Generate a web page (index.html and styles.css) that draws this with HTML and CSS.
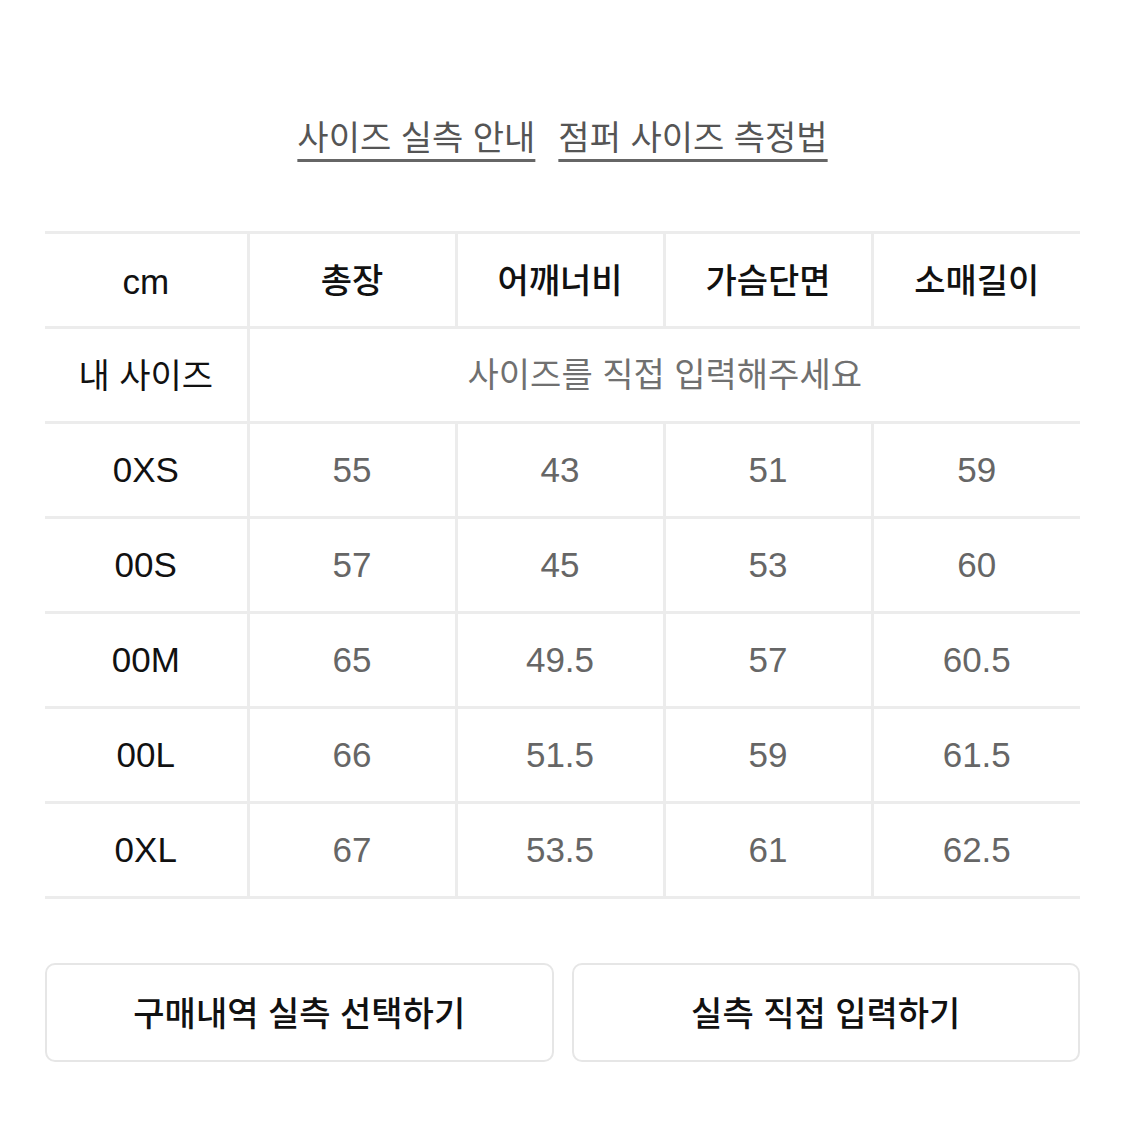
FILE: index.html
```html
<!DOCTYPE html>
<html lang="ko">
<head>
<meta charset="utf-8">
<link rel="stylesheet" href="styles.css">
</head>
<body>
<div class="page">
  <nav class="links">
    <a class="link">사이즈 실측 안내</a>
    <a class="link">점퍼 사이즈 측정법</a>
  </nav>
  <table class="size-table">
    <colgroup>
      <col class="c-label"><col class="c-val"><col class="c-val"><col class="c-val"><col class="c-val">
    </colgroup>
    <thead>
      <tr>
        <th class="unit">cm</th>
        <th>총장</th>
        <th>어깨너비</th>
        <th>가슴단면</th>
        <th>소매길이</th>
      </tr>
    </thead>
    <tbody>
      <tr>
        <th class="rowlabel">내 사이즈</th>
        <td colspan="4" class="placeholder">사이즈를 직접 입력해주세요</td>
      </tr>
      <tr><th class="rowlabel">0XS</th><td>55</td><td>43</td><td>51</td><td>59</td></tr>
      <tr><th class="rowlabel">00S</th><td>57</td><td>45</td><td>53</td><td>60</td></tr>
      <tr><th class="rowlabel">00M</th><td>65</td><td>49.5</td><td>57</td><td>60.5</td></tr>
      <tr><th class="rowlabel">00L</th><td>66</td><td>51.5</td><td>59</td><td>61.5</td></tr>
      <tr><th class="rowlabel">0XL</th><td>67</td><td>53.5</td><td>61</td><td>62.5</td></tr>
    </tbody>
  </table>
  <div class="actions">
    <button class="btn">구매내역 실측 선택하기</button>
    <button class="btn">실측 직접 입력하기</button>
  </div>
</div>
</body>
</html>
```

FILE: styles.css
```css
* { box-sizing: border-box; }
html, body {
  margin: 0;
  padding: 0;
  background: #ffffff;
}
body {
  font-family: "Liberation Sans", "Noto Sans CJK KR", sans-serif;
  color: #111;
}
.page {
  width: 1125px;
  padding: 112px 45px 0 45px;
}
.links {
  display: flex;
  justify-content: center;
  gap: 23px;
  height: 56px;
}
.link {
  font-family: "Noto Sans CJK KR", sans-serif;
  font-size: 34px;
  line-height: 48px;
  color: #555;
  text-decoration: underline;
  text-decoration-thickness: 3px;
  text-underline-offset: 9px;
  text-decoration-color: #666;
}
.size-table {
  margin-top: 63px;
  width: 1035px;
  border-collapse: collapse;
  table-layout: fixed;
}
.c-label { width: 203px; }
.size-table th,
.size-table td {
  border: 3px solid #ececec;
  height: 95px;
  padding: 0;
  text-align: center;
  vertical-align: middle;
}
.size-table tr > :first-child { border-left: none; }
.size-table tr > :last-child { border-right: none; }
.size-table thead th {
  font-family: "Noto Sans CJK KR", sans-serif;
  font-size: 34px;
  font-weight: 500;
  color: #111;
  padding-bottom: 4px;
}
.size-table thead th.unit {
  font-family: "Liberation Sans", sans-serif;
  font-size: 35px;
  font-weight: 400;
  padding: 4px 0 0 0;
}
.rowlabel {
  font-size: 35px;
  font-weight: 400;
  color: #111;
}
.size-table tbody tr:first-child .rowlabel {
  font-family: "Noto Sans CJK KR", sans-serif;
  font-size: 34px;
  padding-bottom: 4px;
}
.size-table td {
  font-size: 35px;
  color: #666;
}
.size-table td.placeholder {
  font-family: "Noto Sans CJK KR", sans-serif;
  font-size: 34px;
  color: #707070;
  padding-bottom: 6px;
}
.actions {
  display: flex;
  gap: 18px;
  margin-top: 64px;
}
.btn {
  flex: 1;
  height: 99px;
  background: #fff;
  border: 2px solid #e6e6e6;
  border-radius: 10px;
  font-family: "Noto Sans CJK KR", sans-serif;
  font-size: 34px;
  font-weight: 500;
  color: #111;
  padding-bottom: 4px;
}
```
